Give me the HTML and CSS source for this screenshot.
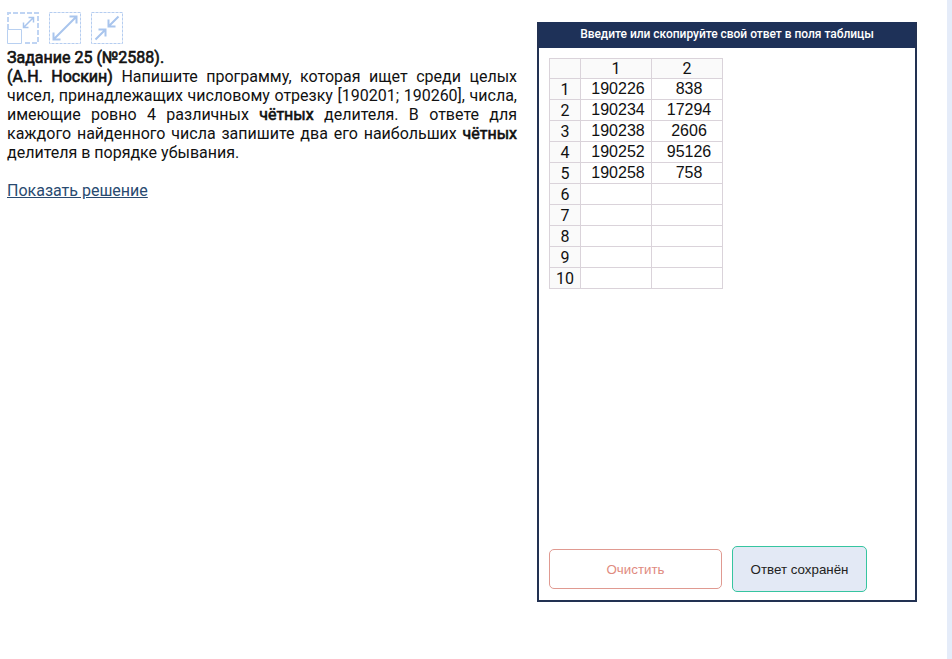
FILE: index.html
```html
<!DOCTYPE html>
<html lang="ru">
<head>
<meta charset="utf-8">
<title>Задание 25</title>
<link rel="stylesheet" href="styles.css">
</head>
<body>
<main class="page">
  <section class="task">
    <div class="tools">
      <svg class="tool" viewBox="0 0 32 32"><path class="dash wide" d="M1 17V1H31V31H16"/><path class="box" d="M.5 17.500H14.500V31.500H.5Z"/><path class="arrow thin" d="M17 15L26 6M16.500 10.500V15.500H21.500M21.500 5.500H26.500V10.500"/></svg>
      <svg class="tool" viewBox="0 0 32 32"><path class="dash" d="M.5.5H31.500V31.500H.5Z"/><path class="arrow" d="M5 27L27 5M4.500 20.500V27.500H11.500M20.500 4.500H27.500V11.500"/></svg>
      <svg class="tool" viewBox="0 0 32 32"><path class="dash" d="M.5.5H31.500V31.500H.5Z"/><path class="arrow" d="M4.500 27.500L14 18M7.500 17.500H14.500V24.500M27.500 4.500L18 14M17.500 7.500V14.500H24.500"/></svg>
    </div>
    <div class="title">Задание 25 (№2588).</div>
    <p class="text"><b>(А.Н. Носкин)</b> Напишите программу, которая ищет среди целых чисел, принадлежащих числовому отрезку [190201; 190260], числа, имеющие ровно 4 различных <b>чётных</b> делителя. В ответе для каждого найденного числа запишите два его наибольших <b>чётных</b> делителя в порядке убывания.</p>
    <a class="solution" href="#">Показать решение</a>
  </section>
  <section class="answer">
    <header class="head">Введите или скопируйте свой ответ в поля таблицы</header>
    <table class="grid">
      <tr><th></th><th>1</th><th>2</th></tr>
      <tr><th>1</th><td>190226</td><td>838</td></tr>
      <tr><th>2</th><td>190234</td><td>17294</td></tr>
      <tr><th>3</th><td>190238</td><td>2606</td></tr>
      <tr><th>4</th><td>190252</td><td>95126</td></tr>
      <tr><th>5</th><td>190258</td><td>758</td></tr>
      <tr><th>6</th><td></td><td></td></tr>
      <tr><th>7</th><td></td><td></td></tr>
      <tr><th>8</th><td></td><td></td></tr>
      <tr><th>9</th><td></td><td></td></tr>
      <tr><th>10</th><td></td><td></td></tr>
    </table>
    <footer class="actions">
      <button class="btn clear">Очистить</button>
      <button class="btn saved">Ответ сохранён</button>
    </footer>
  </section>
</main>
</body>
</html>
```
FILE: styles.css
```css
* { box-sizing: border-box; }
body { margin: 0; font: 16px/19px Roboto, sans-serif; color: #111; background: #fff; }
.page { display: flex; align-items: flex-start; height: 659px; border-right: 5px solid #e5ecf9; }
.task { width: 510px; margin: 12px 20px 0 7px; }
.tools { display: flex; gap: 10px; margin-bottom: 4px; }
.tool { width: 32px; height: 32px; fill: none; }
.dash { stroke: #b5cdf0; stroke-width: 1; stroke-dasharray: 3 1; }
.wide { stroke-width: 2; stroke: #bfd4f3; stroke-dasharray: 5 2; }
.box { stroke: #b8d0f1; }
.arrow { stroke: #a9c5ed; stroke-width: 2; }
.thin { stroke-width: 1.500; }
.title, .text b { font-weight: 400; -webkit-text-stroke: 0.6px #111; }
.text { margin: 0 0 19px; text-align: justify; }
.solution { color: #294a70; }
.answer { display: flex; flex-direction: column; width: 380px; height: 580px; margin-top: 22px; border: 2px solid #223152; border-top: 0; }
.head { height: 26px; background: #1e3158; color: #fff; font-size: 12px; line-height: 24px; font-weight: 500; letter-spacing: -0.03px; text-align: center; }
.grid { width: 174px; margin: 10px; border-collapse: collapse; table-layout: fixed; }
.grid tr { height: 21px; }
.grid tr:first-child { height: 20px; }
.grid th, .grid td { width: 71px; padding: 0; border: 1px solid #dad3da; line-height: 19px; text-align: center; font-weight: 400; }
.grid th { background: #fafafa; }
.grid th:first-child { width: 31px; }
.grid td { font-family: "Liberation Sans", sans-serif; padding: 0 0 1px 4px; line-height: 18px; }
.actions { display: flex; align-items: center; gap: 10px; margin: auto 0 8px 10px; }
.btn { border-radius: 5px; font: 13.333px/16px "Liberation Sans", sans-serif; padding: 1px 0 0; }
.clear { width: 173px; height: 40px; border: 1px solid #e09a91; background: #fff; color: #df8b80; }
.saved { width: 135px; height: 46px; border: 1px solid #36c5a0; background: #e3e9f5; color: #222; }
```
